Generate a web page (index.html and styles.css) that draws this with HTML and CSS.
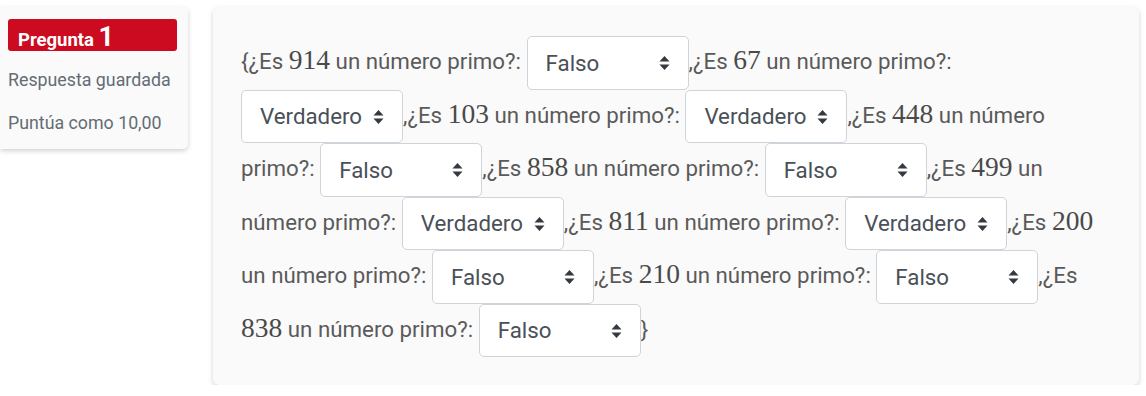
FILE: index.html
```html
<!DOCTYPE html>
<html lang="es">
<head>
    <meta charset="UTF-8">
    <meta name="viewport" content="width=device-width, initial-scale=1.0">
    <title>Pregunta 1</title>
    <link rel="stylesheet" href="styles.css">
</head>
<body>
    <div class="que">
        <!-- Question info -->
        <div class="info">
            <h3 class="no">Pregunta <span class="qno">1</span></h3>
            <div class="state">Respuesta guardada</div>
            <div class="grade">Puntúa como 10,00</div>
        </div>

        <!-- Question text with the answer selects -->
        <div class="content">
            <div class="formulation">{¿Es <span class="num">914</span> un número primo?: <span class="pick"><select><option>Verdadero</option><option selected>Falso</option></select><svg viewBox="0 0 10 14"><path d="M5 0L10 5.5H0Z M5 14L0 8.5H10Z"/></svg></span>,¿Es <span class="num">67</span> un número primo?: <span class="pick"><select><option selected>Verdadero</option><option>Falso</option></select><svg viewBox="0 0 10 14"><path d="M5 0L10 5.5H0Z M5 14L0 8.5H10Z"/></svg></span>,¿Es <span class="num">103</span> un número primo?: <span class="pick"><select><option selected>Verdadero</option><option>Falso</option></select><svg viewBox="0 0 10 14"><path d="M5 0L10 5.5H0Z M5 14L0 8.5H10Z"/></svg></span>,¿Es <span class="num">448</span> un número primo?: <span class="pick"><select><option>Verdadero</option><option selected>Falso</option></select><svg viewBox="0 0 10 14"><path d="M5 0L10 5.5H0Z M5 14L0 8.5H10Z"/></svg></span>,¿Es <span class="num">858</span> un número primo?: <span class="pick"><select><option>Verdadero</option><option selected>Falso</option></select><svg viewBox="0 0 10 14"><path d="M5 0L10 5.5H0Z M5 14L0 8.5H10Z"/></svg></span>,¿Es <span class="num">499</span> un número primo?: <span class="pick"><select><option selected>Verdadero</option><option>Falso</option></select><svg viewBox="0 0 10 14"><path d="M5 0L10 5.5H0Z M5 14L0 8.5H10Z"/></svg></span>,¿Es <span class="num">811</span> un número primo?: <span class="pick"><select><option selected>Verdadero</option><option>Falso</option></select><svg viewBox="0 0 10 14"><path d="M5 0L10 5.5H0Z M5 14L0 8.5H10Z"/></svg></span>,¿Es <span class="num">200</span> un número primo?: <span class="pick"><select><option>Verdadero</option><option selected>Falso</option></select><svg viewBox="0 0 10 14"><path d="M5 0L10 5.5H0Z M5 14L0 8.5H10Z"/></svg></span>,¿Es <span class="num">210</span> un número primo?: <span class="pick"><select><option>Verdadero</option><option selected>Falso</option></select><svg viewBox="0 0 10 14"><path d="M5 0L10 5.5H0Z M5 14L0 8.5H10Z"/></svg></span>,¿Es <span class="num">838</span> un número primo?: <span class="pick"><select><option>Verdadero</option><option selected>Falso</option></select><svg viewBox="0 0 10 14"><path d="M5 0L10 5.5H0Z M5 14L0 8.5H10Z"/></svg></span>}</div>
        </div>
    </div>
</body>
</html>
```

FILE: styles.css
```css
* {
    box-sizing: border-box;
}
html, body {
    margin: 0;
    padding: 0;
    background: #ffffff;
    font-family: 'Roboto', sans-serif;
}
.que {
    display: flex;
    align-items: flex-start;
    gap: 25px;
    padding-top: 7px;
}
.info {
    width: 188px;
    padding: 12px 11px 13px 8px;
    background: #fafafa;
    border-radius: 0 5px 5px 0;
    box-shadow: 0 2px 5px rgba(0, 0, 0, 0.18);
    color: #646c74;
    font-size: 17.8px;
}
.no {
    margin: 0 0 16px;
    height: 32px;
    padding: 0 10px;
    background: #cc0a20;
    border-radius: 3px;
    color: #fff;
    font-size: 18.5px;
    font-weight: bold;
    line-height: 36px;
}
.qno {
    font-size: 27px;
}
.state {
    line-height: 26px;
    margin-bottom: 17px;
}
.grade {
    line-height: 26px;
}
.content {
    width: 926px;
    padding: 29px 28px 28px;
    background: #fafafa;
    border-radius: 6px;
    box-shadow: 0 2px 5px rgba(0, 0, 0, 0.18);
}
.formulation {
    color: #5a5a5a;
    font-size: 22.3px;
    line-height: 30px;
}
.num {
    font-family: 'Liberation Serif', serif;
    font-size: 27.5px;
    color: #4a4a4a;
}
.pick {
    position: relative;
    display: inline-block;
    vertical-align: middle;
}
.pick select {
    display: block;
    width: 162px;
    height: 53.5px;
    padding: 0 30px 0 18px;
    border: 1px solid #ced4da;
    border-radius: 5px;
    background: #fff;
    color: #495057;
    font-family: 'Roboto', sans-serif;
    font-size: 22.3px;
    appearance: none;
    -webkit-appearance: none;
}
/* up/down arrows drawn over the select */
.pick svg {
    position: absolute;
    right: 19px;
    top: 20px;
    width: 11px;
    height: 14px;
    fill: #343a40;
    pointer-events: none;
}
```
